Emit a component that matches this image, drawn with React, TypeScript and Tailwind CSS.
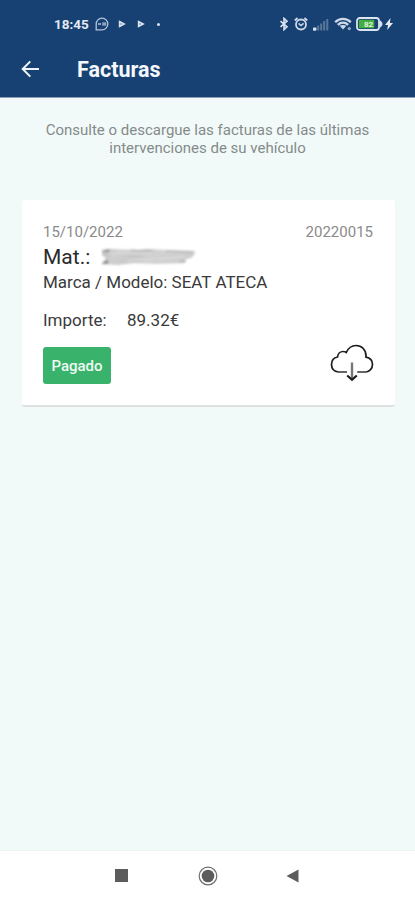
import React from 'react';

interface Invoice {
  date: string;
  number: string;
  model: string;
  amount: string;
  status: string;
}

const invoices: Invoice[] = [
  {
    date: '15/10/2022',
    number: '20220015',
    model: 'SEAT ATECA',
    amount: '89.32€',
    status: 'Pagado',
  },
];

const PlayGlyph: React.FC = () => (
  <svg width="8" height="8" viewBox="0 0 8 8">
    <path d="M.8.3 7.800 4 .8 7.700Z" fill="#dbe4f0" />
    <path d="M2.600 3v2l1.600-1Z" fill="#4a6c96" />
  </svg>
);

const StatusBar: React.FC = () => (
  <div className="flex h-12 items-center pl-[54px] pr-[22px] text-[#e3eaf4]">
    <span className="w-[36px] whitespace-nowrap pt-px text-[13.5px] font-bold leading-none">18:45</span>
    <svg className="ml-[5px]" width="14" height="14" viewBox="0 0 14 14" fill="none" stroke="#b5c4d9">
      <path d="M1.200 12.800V7A5.800 5.800 0 1 1 7 12.800Z" strokeWidth="1.300" />
      <path d="M3 7h3M7.200 6.200h4M7.200 7.800h4" strokeWidth="1.300" />
    </svg>
    <div className="ml-[9px] flex items-center gap-[11px]">
      <PlayGlyph />
      <PlayGlyph />
    </div>
    <span className="ml-[12px] h-[3px] w-[3px] rounded-full bg-[#dbe4f0]" />

    <div className="ml-auto flex items-center">
      {/* bluetooth */}
      <svg width="10" height="14" viewBox="0 0 10 14" fill="none" stroke="#dbe4f0" strokeWidth="1.600">
        <path d="M1.500 4.200 8 9.800 5 12.600V1.400l3 2.800L1.500 9.800" />
      </svg>
      {/* alarm */}
      <svg className="ml-[5px]" width="14" height="14" viewBox="0 0 14 14" fill="none" stroke="#cdd8e8">
        <circle cx="7" cy="7.500" r="5" strokeWidth="1.800" />
        <path d="M.8 3.400 3.600 1M13.200 3.400 10.400 1" strokeWidth="2" />
        <path d="M4.600 6.400 7 8.600l2.600-2.200" strokeWidth="1.500" />
      </svg>
      {/* signal */}
      <svg className="ml-[4px]" width="17" height="13" viewBox="0 0 17 13" fill="#5a7899">
        <rect x="1" y="9.500" width="3.400" height="3.200" rx=".8" fill="#dbe4f0" />
        <rect x="5.200" y="7.500" width="2" height="5" />
        <rect x="8.200" y="5.500" width="2" height="7" />
        <rect x="11.200" y="3" width="2" height="9.500" />
        <rect x="14.300" y="1" width="2" height="11.500" />
      </svg>
      {/* wifi */}
      <svg className="ml-[5px]" width="18" height="14" viewBox="0 0 18 14" fill="none" stroke="#cdd8e8" strokeWidth="2.300">
        <path d="M1.200 5.200C5.600.7 12.400.7 16.800 5.200" />
        <path d="M3.800 7.900c3.100-2.900 7.300-2.900 10.400 0" />
        <path d="m5.600 8.800 3.400 3.800 3.400-3.800C10.400 7.600 7.600 7.600 5.600 8.800Z" fill="#cdd8e8" stroke="none" />
        <circle cx="15.300" cy="11.600" r="1.700" fill="#8fa6c4" stroke="none" />
      </svg>
      {/* battery */}
      <svg className="ml-[4px]" width="27" height="14" viewBox="0 0 27 14">
        <rect x="1" y="1" width="22" height="12" rx="2.800" fill="#164172" stroke="#dbe4f0" strokeWidth="1.800" />
        <path d="M24 4c2.600.5 2.600 5.500 0 6Z" fill="#dbe4f0" stroke="#dbe4f0" />
        <rect x="2.800" y="2.800" width="15.500" height="8.400" rx="1" fill="#43ad42" />
        <text x="12.500" y="9.900" textAnchor="middle" fontFamily="Roboto, sans-serif" fontSize="8" fontWeight="700" fill="#e6f5df">82</text>
      </svg>
      <svg className="ml-[2px]" width="8" height="12" viewBox="0 0 8 12" fill="#e3eaf4">
        <path d="M5.500 0 0 7h3l-.8 5L8 5H4.900Z" />
      </svg>
    </div>
  </div>
);

const Header: React.FC = () => (
  <header className="h-[98px] border-b border-[#8c9db5] bg-[#164172]">
    <StatusBar />
    <div className="flex h-[43px] items-center pl-[21px]">
      <button aria-label="Volver" className="-mt-[2px]">
        <svg width="19" height="18" viewBox="0 0 19 18" fill="none" stroke="#f1f5fa" strokeWidth="2">
          <path d="M18 9H2M9.300 1.400 1.700 9l7.600 7.600" />
        </svg>
      </button>
      <h1 className="ml-[37px] pt-px text-[21.5px] font-bold leading-none text-[#f4f7fb]">Facturas</h1>
    </div>
  </header>
);

const DownloadIcon: React.FC = () => (
  <svg width="44" height="38" viewBox="0 0 44 38" fill="none" stroke="#1d1d1d" strokeWidth="1.700">
    <path d="M8.500 28C4.200 27.500 1.500 24.500 1.500 20.500c0-4 2.500-6.800 6-7.500.3-3.500 3-5.700 6-5.500 1 0 2 .4 2.800 1C18.300 4 22 1.500 26 1.500c6 0 10 4.500 10 10.500v1.200c4 .8 6.500 3.800 6.500 7.300 0 4-3 7-6.500 7.500" />
    <path d="M8 28h9M27.200 28h9.300" stroke="#666" strokeWidth="2" />
    <path d="M22 18.500v16" stroke="#777" strokeWidth="2.400" />
    <path d="m17.200 31.500 4.800 4.300 4.800-4.300" strokeWidth="2.200" />
  </svg>
);

// Scribble hiding the plate number
const HiddenPlate: React.FC = () => (
  <svg width="96" height="20" viewBox="0 0 96 20">
    <defs>
      <linearGradient id="smudge" x1="0" y1="0" x2="1" y2="0.15">
        <stop offset="0" stopColor="#bcbcbc" />
        <stop offset=".2" stopColor="#d0d0d0" />
        <stop offset=".45" stopColor="#c6c6c6" />
        <stop offset=".6" stopColor="#d2d2d2" />
        <stop offset="1" stopColor="#cccccc" />
      </linearGradient>
      <filter id="soften" x="-5%" y="-10%" width="110%" height="120%">
        <feGaussianBlur stdDeviation=".8" />
      </filter>
    </defs>
    <g filter="url(#soften)">
      <path d="M1 3 8 2l29 1 10-1 19 1 28 1-1 4-3 3-5 1-1 4-29 1-23-1-15 2-17-1 5-6-4-3Z" fill="url(#smudge)" />
      <path d="m1 17 5-4 2 2-2 2ZM1 4l8-2-2 3Z" fill="#888" />
      <path d="M9 7c13-3 27 1 42-1M56 12c10-2 18 0 28-3M26 14c11-3 18-1 27-2" fill="none" stroke="#d9d9d9" strokeWidth="2" />
      <path d="M30 3c8 1 15 0 22 1M65 4l27 1M78 15l7-1" fill="none" stroke="#a9a9a9" />
    </g>
  </svg>
);

const InvoiceCard: React.FC<{ invoice: Invoice }> = ({ invoice }) => (
  <article className="mx-[22px] h-[207px] w-[373px] rounded-[3px] border-b-2 border-[#dde1e1] bg-white pl-[21px] pr-[22px] pt-[23px] text-[#3a3a3a]">
    <div className="flex h-[18px] items-center justify-between text-[15px] text-[#8a8a8a]">
      <span>{invoice.date}</span>
      <span>{invoice.number}</span>
    </div>
    <div className="flex h-[31px] items-center text-[21px] text-[#2a2a2a]">
      <span className="w-[58px] whitespace-nowrap pt-[3px]">Mat.:</span>
      <HiddenPlate />
    </div>
    <p className="flex h-[22px] items-center whitespace-nowrap text-[17px]">
      Marca / Modelo: {invoice.model}
    </p>
    <div className="mt-[16px] flex h-[22px] items-center text-[17px]">
      <span className="w-[84px]">Importe:</span>
      <span>{invoice.amount}</span>
    </div>
    <div className="mt-[12px] flex items-start justify-between">
      <span className="mt-[3px] flex h-[37px] w-[68px] items-center justify-center rounded-[3px] bg-[#39b36c] pt-px text-[15px] font-medium text-[#effbf3]">
        {invoice.status}
      </span>
      <button aria-label="Descargar" className="-mr-px">
        <DownloadIcon />
      </button>
    </div>
  </article>
);

const NavBar: React.FC = () => (
  <nav className="flex h-[50px] items-center justify-between border-t border-[#edf3f3] bg-white pl-[115px] pr-[116px]">
    <span className="h-[13px] w-[13px] bg-[#5c5c5c]" />
    <svg className="ml-[2px]" width="20" height="20" viewBox="0 0 20 20">
      <circle cx="10" cy="10" r="8.800" fill="none" stroke="#6e6e6e" strokeWidth="1.200" />
      <circle cx="10" cy="10" r="6.300" fill="#5c5c5c" />
    </svg>
    <svg width="13" height="14" viewBox="0 0 13 14">
      <path d="M.5 7 12.500.5v13Z" fill="#5c5c5c" />
    </svg>
  </nav>
);

export default function App() {
  return (
    <div className="flex h-[900px] w-[415px] flex-col overflow-hidden bg-[#f1faf9] font-[Roboto,sans-serif]">
      <Header />
      <main className="flex-1">
        <p className="pt-[23px] text-center text-[15px] leading-[18px] text-[#858b8a]">
          Consulte o descargue las facturas de las últimas
          <br />
          intervenciones de su vehículo
        </p>
        <div className="mt-[43px]">
          {invoices.map(invoice => (
            <InvoiceCard key={invoice.number} invoice={invoice} />
          ))}
        </div>
      </main>
      <NavBar />
    </div>
  );
}
